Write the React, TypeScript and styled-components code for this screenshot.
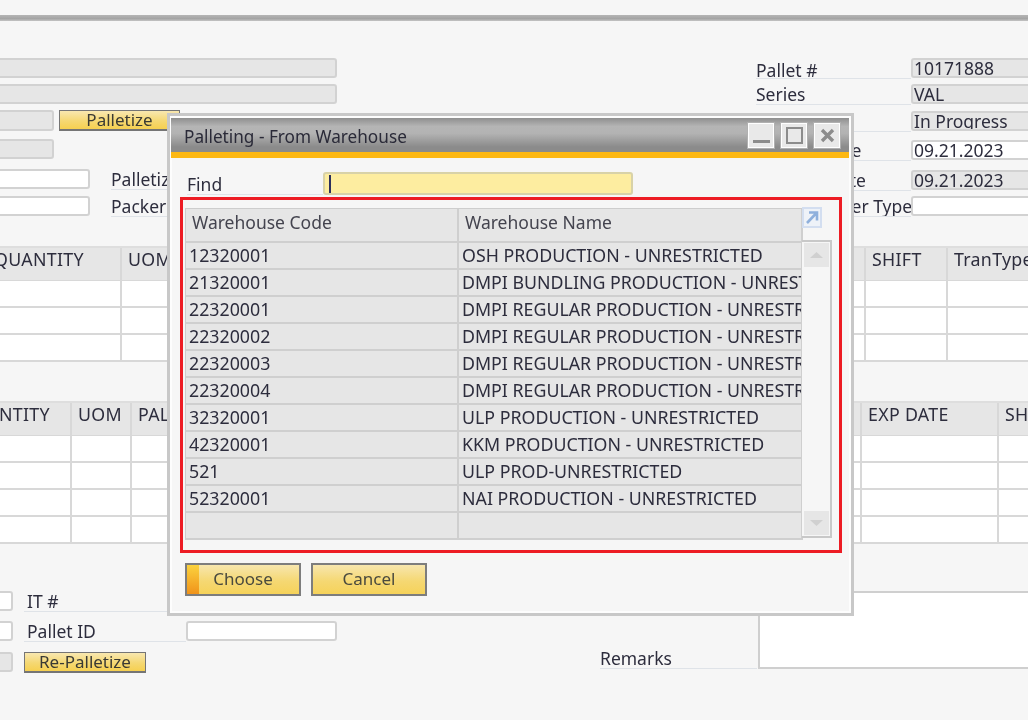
import React from "react";
import styled, { createGlobalStyle } from "styled-components";

const Global = createGlobalStyle`
  html, body { margin: 0; padding: 0; background: #f6f6f6; }
  * { box-sizing: border-box; }
`;

const INK = "#2d2d3d";

const Screen = styled.div`
  position: relative;
  width: 1028px;
  height: 720px;
  overflow: hidden;
  background: #f6f6f6;
  padding-top: 15px;
  font-family: "Noto Sans", "Open Sans", sans-serif;
  font-size: 17.5px;
  color: ${INK};
  filter: blur(0.35px);
`;

const TopRule = styled.div`
  height: 6px;
  background: linear-gradient(#b5b5b5, #a4a4a4 60%, #c4c4c4);
`;

const Header = styled.div`
  display: flex;
  margin: 37px 0 30px -6px;
  height: 158px;
`;

const LeftFields = styled.div`
  width: 343px;
  margin-right: 419px;
  flex: none;
  display: grid;
  grid-template-rows: 26px 26px 29px 30px 27px 20px;
`;

const RightFields = styled.div`
  flex: none;
  width: 290px;
  display: grid;
  grid-template-rows: 26px 27px 29px 30px 26px 20px;
`;

const Row = styled.div`
  display: flex;
  align-items: flex-start;
`;

const Field = styled.div<{ $w?: number; $white?: boolean; $h?: number }>`
  flex: ${(p) => (p.$w ? "none" : "1")};
  width: ${(p) => (p.$w ? `${p.$w}px` : "auto")};
  height: ${(p) => p.$h ?? 20}px;
  background: ${(p) => (p.$white ? "#fff" : "#e6e6e6")};
  border: 2px solid #d2d2d2;
  border-radius: 3px;
  padding-left: 1px;
  line-height: 17px;
  white-space: nowrap;
  overflow: hidden;
`;

const Label = styled.div<{ $w: number; $ml?: number; $pl?: number; $lh?: number }>`
  flex: none;
  width: ${(p) => p.$w}px;
  margin-left: ${(p) => p.$ml ?? 0}px;
  padding-left: ${(p) => p.$pl ?? 0}px;
  height: 21px;
  line-height: ${(p) => p.$lh ?? 21}px;
  border-bottom: 1px solid #dfe3e8;
  white-space: nowrap;
  overflow: hidden;
`;

const YellowButton = styled.div<{ $w: number; $ml: number }>`
  flex: none;
  width: ${(p) => p.$w}px;
  margin-left: ${(p) => p.$ml}px;
  height: 21px;
  border: 1px solid #757575;
  border-width: 1px 1px 2px 1px;
  background: linear-gradient(#f8e7b0, #f5d873 55%, #f6d050);
  text-align: center;
  font-size: 17px;
  line-height: 18px;
  color: #3a3a34;
`;

const Table = styled.div<{ $cols: string; $ml: number; $mb: number; $rows: number }>`
  display: grid;
  grid-template-columns: ${(p) => p.$cols};
  grid-template-rows: 33px repeat(${(p) => p.$rows}, 27px);
  margin-left: ${(p) => p.$ml}px;
  margin-bottom: ${(p) => p.$mb}px;
  width: 1200px;
  border-top: 2px solid #dedede;
`;

const HeadCell = styled.div`
  background: #e6e6e6;
  border-right: 2px solid #d8d8d8;
  border-bottom: 1px solid #d8d8d8;
  padding: 0 0 0 6px;
  font-size: 17.8px;
  letter-spacing: 0.3px;
  line-height: 22px;
  white-space: nowrap;
  overflow: hidden;
`;

const BodyCell = styled.div`
  background: #fff;
  border-right: 2px solid #d8d8d8;
  border-bottom: 2px solid #d8d8d8;
`;

const Bottom = styled.div`
  display: flex;
  margin-left: -6px;
`;

const BottomLeft = styled.div`
  width: 343px;
  flex: none;
  display: grid;
  grid-template-rows: 30px 31px 21px;
`;

const BottomRight = styled.div`
  display: flex;
  align-items: flex-end;
  height: 78px;
  margin-left: 263px;
  flex: none;
`;

const Remarks = styled.div`
  flex: none;
  width: 270px;
  height: 78px;
  margin-left: 1px;
  background: #fff;
  border: solid #cfcfcf;
  border-width: 2px 0 2px 2px;
`;

/* Dialog window — lies over the form */
const Dialog = styled.div`
  position: absolute;
  left: 167px;
  top: 113px;
  width: 687px;
  height: 503px;
  background: #f6f6f6;
  border: 3px solid #c8c8c8;
  box-shadow: inset 0 0 0 2px #fdfdfd;
  padding: 2px 2px 4px 1px;
`;

const TitleBar = styled.div`
  display: flex;
  align-items: flex-start;
  height: 40px;
  background: linear-gradient(#8f8f8f 0, #b5b5b5 25%, #b3b3b3 45%, #8b8b8b 85%) top / 100% 34px no-repeat, #fdb813;
  padding: 4px 8px 0 13px;
`;

const Title = styled.div`
  flex: 1;
  font-size: 17.2px;
  color: #2a2a38;
  line-height: 30px;
`;

const WinButton = styled.div`
  width: 28px;
  height: 27px;
  margin-left: 5px;
  background: #e9e9e9;
  border: 1px solid #b0b0b0;
  box-shadow: inset 0 0 0 1px #fff;
  display: flex;
  align-items: center;
  justify-content: center;
`;

const DialogBody = styled.div`
  padding: 14px 8px 0 9px;
`;

const FindRow = styled.div`
  display: flex;
  height: 25px;
  margin-left: 7px;
`;

const FindLabel = styled.div`
  width: 136px;
  flex: none;
  border-bottom: 1px solid #dfe3e8;
  line-height: 22px;
  padding-top: 1px;
  height: 23px;
`;

const FindInput = styled.div`
  width: 310px;
  height: 23px;
  background: #fdeda0;
  border: 2px solid #d8d2a8;
  border-radius: 3px;
  padding: 1px 0 0 4px;
`;

const Caret = styled.div`
  width: 2px;
  height: 18px;
  background: #2b2f5c;
`;

const Frame = styled.div`
  width: 662px;
  height: 356px;
  border: 3px solid #ed1c24;
  display: flex;
  padding: 8px 0 0 2px;
`;

const List = styled.div`
  flex: none;
  width: 617px;
  display: grid;
  grid-template-columns: 273px 344px;
  grid-template-rows: 34px repeat(11, 27px);
  border: solid #cdcdcd;
  border-width: 1px 0 0 1px;
  height: 332px;
`;

const ListHead = styled.div`
  background: #e6e6e6;
  border-right: 2px solid #cfcfcf;
  border-bottom: 2px solid #cfcfcf;
  padding: 1px 0 0 6px;
  line-height: 24px;
  color: #44444f;
`;

const ListCell = styled.div`
  background: #e6e6e6;
  border-right: 2px solid #cfcfcf;
  border-bottom: 2px solid #cfcfcf;
  padding-left: 3px;
  font-size: 17.8px;
  line-height: 25px;
  white-space: nowrap;
  overflow: hidden;
`;

const Side = styled.div`
  flex: none;
  width: 31px;
  display: flex;
  flex-direction: column;
`;

const ExpandIcon = styled.svg`
  display: block;
  width: 20px;
  height: 21px;
  margin: -1px 0 12px 0;
`;

const Scrollbar = styled.div`
  width: 30px;
  height: 298px;
  background: #f6f6f6;
  border: solid #c8c8c8;
  border-width: 2px 2px 2px 0;
  padding: 1px 1px 1px 2px;
  display: flex;
  flex-direction: column;
  justify-content: space-between;
`;

const ScrollButton = styled.div`
  height: 24px;
  width: 25px;
  background: #e6e6e6;
  display: flex;
  align-items: center;
  justify-content: center;
`;

const Actions = styled.div`
  display: flex;
  gap: 10px;
  margin: 10px 0 0 5px;
`;

const ActionButton = styled.div<{ $accent?: boolean }>`
  width: 116px;
  height: 33px;
  border: 2px solid #7d7d7d;
  background: ${(p) =>
    p.$accent
      ? "linear-gradient(#fbd23e, #f0931a) left / 12px 100% no-repeat, linear-gradient(#f7e6ae, #f5d873 55%, #f6d25a)"
      : "linear-gradient(#f7e6ae, #f5d873 55%, #f6d25a)"};
  text-align: center;
  font-size: 17px;
  line-height: 28px;
  color: #4a4a3e;
`;

const Triangle = ({ up }: { up?: boolean }) => (
  <svg width="13" height="6" viewBox="0 0 13 6">
    <polygon points={up ? "6.5,0 13,6 0,6" : "0,0 13,0 6.5,6"} fill="#d0d0d0" />
  </svg>
);

const rows: [string, string][] = [
  ["12320001", "OSH PRODUCTION - UNRESTRICTED"],
  ["21320001", "DMPI BUNDLING PRODUCTION - UNRESTRICTED"],
  ["22320001", "DMPI REGULAR PRODUCTION - UNRESTRICTED"],
  ["22320002", "DMPI REGULAR PRODUCTION - UNRESTRICTED"],
  ["22320003", "DMPI REGULAR PRODUCTION - UNRESTRICTED"],
  ["22320004", "DMPI REGULAR PRODUCTION - UNRESTRICTED"],
  ["32320001", "ULP PRODUCTION - UNRESTRICTED"],
  ["42320001", "KKM PRODUCTION - UNRESTRICTED"],
  ["521", "ULP PROD-UNRESTRICTED"],
  ["52320001", "NAI PRODUCTION - UNRESTRICTED"],
  ["", ""],
];

const BackTable = ({
  cols, ml, mb, heads, n,
}: { cols: number[]; ml: number; mb: number; heads: string[]; n: number }) => (
  <Table $cols={cols.map((c) => `${c}px`).join(" ")} $ml={ml} $mb={mb} $rows={n}>
    {heads.map((h, i) => <HeadCell key={i}>{h}</HeadCell>)}
    {Array.from({ length: n * heads.length }).map((_, i) => <BodyCell key={i} />)}
  </Table>
);

export default function App() {
  return (
    <Screen>
      <Global />
      <TopRule />
      <Header>
        <LeftFields>
          <Row><Field /></Row>
          <Row><Field /></Row>
          <Row><Field $w={60} $h={21} /><YellowButton $w={121} $ml={5}>Palletize</YellowButton></Row>
          <Row><Field $w={60} /></Row>
          <Row><Field $w={96} $white /><Label $w={60} $ml={21}>Palletizer</Label></Row>
          <Row><Field $w={96} $white /><Label $w={60} $ml={21}>Packer</Label></Row>
        </LeftFields>
        <RightFields>
          <Row><Label $w={155} $lh={25}>Pallet #</Label><Field>10171888</Field></Row>
          <Row><Label $w={155}>Series</Label><Field>VAL</Field></Row>
          <Row><Label $w={155}>Status</Label><Field>In Progress</Field></Row>
          <Row><Label $w={155}>Posting Date</Label><Field $white>09.21.2023</Field></Row>
          <Row><Label $w={155}>Delivery Date</Label><Field>09.21.2023</Field></Row>
          <Row><Label $w={155}>Manufacturer Type</Label><Field $white /></Row>
        </RightFields>
      </Header>

      <BackTable cols={[134, 744, 82, 200]} ml={-12} mb={39} heads={["QUANTITY", "UOM", "SHIFT", "TranType"]} n={3} />
      <BackTable cols={[118, 60, 730, 137, 100]} ml={-46} mb={47} heads={["QUANTITY", "UOM", "PALLET", "EXP DATE", "SHIFT"]} n={4} />

      <Bottom>
        <BottomLeft>
          <Row><Field $w={19} $white /><Label $w={162} $ml={11} $pl={3}>IT #</Label></Row>
          <Row><Field $w={19} $white /><Label $w={162} $ml={11} $pl={3}>Pallet ID</Label><Field $white /></Row>
          <Row><Field $w={19} /><YellowButton $w={122} $ml={11}>Re-Palletize</YellowButton></Row>
        </BottomLeft>
        <BottomRight>
          <Label $w={157}>Remarks</Label>
          <Remarks />
        </BottomRight>
      </Bottom>

      <Dialog>
        <TitleBar>
          <Title>Palleting - From Warehouse</Title>
          <WinButton>
            <svg width="17" height="17" viewBox="0 0 17 17"><rect x="0" y="13" width="17" height="3" fill="#8c8c8c" /></svg>
          </WinButton>
          <WinButton>
            <svg width="17" height="17" viewBox="0 0 17 17"><rect x="1" y="1" width="15" height="15" fill="none" stroke="#8c8c8c" strokeWidth="2" /></svg>
          </WinButton>
          <WinButton>
            <svg width="15" height="15" viewBox="0 0 15 15"><path d="M2 2 L13 13 M13 2 L2 13" stroke="#8c8c8c" strokeWidth="3.4" /></svg>
          </WinButton>
        </TitleBar>
        <DialogBody>
          <FindRow>
            <FindLabel>Find</FindLabel>
            <FindInput><Caret /></FindInput>
          </FindRow>
          <Frame>
            <List>
              <ListHead>Warehouse Code</ListHead>
              <ListHead>Warehouse Name</ListHead>
              {rows.map(([code, name], i) => (
                <React.Fragment key={i}>
                  <ListCell>{code}</ListCell>
                  <ListCell>{name}</ListCell>
                </React.Fragment>
              ))}
            </List>
            <Side>
              <ExpandIcon viewBox="0 0 20 21">
                <rect x="1" y="1" width="18" height="19" fill="#eef2f8" stroke="#d3def0" strokeWidth="2" />
                <path d="M5 16 L14 6.5 M7 5.5 H15 V13.5" fill="none" stroke="#8fb0dc" strokeWidth="2.6" />
              </ExpandIcon>
              <Scrollbar>
                <ScrollButton><Triangle up /></ScrollButton>
                <ScrollButton><Triangle /></ScrollButton>
              </Scrollbar>
            </Side>
          </Frame>
          <Actions>
            <ActionButton $accent>Choose</ActionButton>
            <ActionButton>Cancel</ActionButton>
          </Actions>
        </DialogBody>
      </Dialog>
    </Screen>
  );
}
